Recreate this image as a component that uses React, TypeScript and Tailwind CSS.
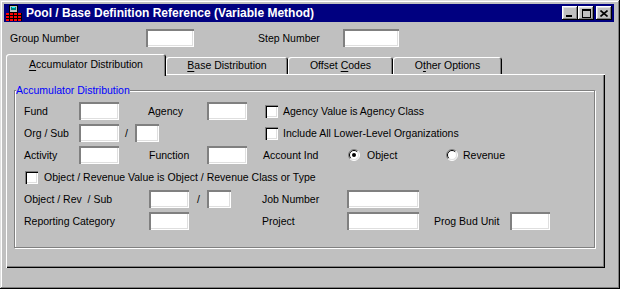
const raised =
  "bg-[#c0c0c0] shadow-[inset_-1px_-1px_0_#000,inset_1px_1px_0_#fff,inset_-2px_-2px_0_#808080,inset_2px_2px_0_#dfdfdf]";
const sunken =
  "bg-white shadow-[inset_1px_1px_0_#808080,inset_2px_2px_0_#808080,inset_-1px_-1px_0_#fff,inset_-2px_-2px_0_#dfdfdf]";

function Field({ className }: { className: string }) {
  return <div className={`h-[18px] shrink-0 ${sunken} ${className}`} />;
}

function Check() {
  return (
    <span className="h-[13px] w-[13px] shrink-0 bg-white shadow-[inset_1px_1px_0_#808080,inset_2px_2px_0_#000,inset_-1px_-1px_0_#fff,inset_-2px_-2px_0_#dfdfdf]" />
  );
}

function Radio({ checked }: { checked?: boolean }) {
  return (
    <svg width="12" height="12" viewBox="0 0 12 12" className="shrink-0">
      <circle cx="6" cy="6" r="5" fill="#fff" />
      <path d="M2.1 9.9A5.5 5.5 0 0 1 9.9 2.1" fill="none" stroke="#808080" />
      <path d="M2.8 9.2A4.5 4.5 0 0 1 9.2 2.8" fill="none" stroke="#000" />
      <path d="M9.9 2.1A5.5 5.5 0 0 1 2.1 9.9" fill="none" stroke="#fff" />
      <path d="M9.2 2.8A4.5 4.5 0 0 1 2.8 9.2" fill="none" stroke="#dfdfdf" />
      {checked && <circle cx="6" cy="6" r="2" fill="#000" />}
    </svg>
  );
}

function AppIcon() {
  return (
    <svg width="16" height="16" viewBox="0 0 16 16" className="shrink-0">
      <rect x="3.5" y="0.5" width="8" height="7" fill="#c0c0c0" stroke="#000" />
      <rect x="5" y="2" width="5" height="3" fill="#008080" />
      <rect x="6" y="2" width="3" height="1" fill="#00ffff" />
      <rect x="0" y="8" width="16" height="8" fill="#ff0000" />
      <path d="M0 10.5H16M0 13.5H16M3.5 8V16M7.5 8V16M11.5 8V16M15.5 8V16" stroke="#000" />
    </svg>
  );
}

function Tab({ label, hot, w }: { label: string; hot: number; w: string }) {
  return (
    <div
      className={`flex h-[17px] ${w} shrink-0 items-center justify-center rounded-t-[3px] shadow-[inset_1px_1px_0_#fff,inset_-1px_0_0_#000,inset_-2px_0_0_#808080]`}
    >
      <span className="whitespace-pre">
        {label.slice(0, hot)}
        <span className="underline underline-offset-[2px]">{label[hot]}</span>
        {label.slice(hot + 1)}
      </span>
    </div>
  );
}

export default function App() {
  return (
    <div className="flex h-[289px] w-[620px] flex-col bg-[#c0c0c0] p-[4px] pr-[6px] font-['Liberation_Sans',Arial,sans-serif] text-[10.5px] leading-[13px] text-black shadow-[inset_-1px_-1px_0_#000,inset_1px_1px_0_#dfdfdf,inset_-2px_-2px_0_#808080,inset_2px_2px_0_#fff]">
      {/* title bar */}
      <div className="flex h-[18px] shrink-0 items-center bg-[#000080] pl-[2px] pr-[2px]">
        <AppIcon />
        <span className="ml-[4px] text-[12px] font-bold leading-[14px] text-white">
          Pool / Base Definition Reference (Variable Method)
        </span>
        <div className="ml-auto flex items-center">
          <div className={`flex h-[14px] w-[16px] items-end justify-center pb-[3px] pr-[2px] ${raised}`}>
            <div className="h-[2px] w-[6px] bg-black" />
          </div>
          <div className={`flex h-[14px] w-[16px] items-center justify-center ${raised}`}>
            <div className="h-[9px] w-[9px] border border-t-2 border-black" />
          </div>
          <div className={`ml-[2px] flex h-[14px] w-[16px] items-center justify-center ${raised}`}>
            <svg width="8" height="7" viewBox="0 0 8 7">
              <path d="M0.5 0.5L7.5 6.5M7.5 0.5L0.5 6.5" stroke="#000" strokeWidth="1.6" />
            </svg>
          </div>
        </div>
      </div>

      {/* group / step */}
      <div className="mt-[7px] flex h-[18px] shrink-0 items-center pl-[6px]">
        <span className="w-[136px] shrink-0">Group Number</span>
        <Field className="w-[48px]" />
        <span className="ml-[64px] w-[85px] shrink-0">Step Number</span>
        <Field className="w-[56px]" />
      </div>

      {/* tabs */}
      <div className="mt-[7px] flex h-[20px] shrink-0 items-end pl-[2px]">
        <div className="relative z-10 -mb-[2px] flex h-[22px] w-[160px] shrink-0 items-center justify-center rounded-t-[3px] bg-[#c0c0c0] pb-[2px] shadow-[inset_1px_1px_0_#fff,inset_-1px_0_0_#000,inset_-2px_0_0_#808080]">
          <span>
            <span className="underline underline-offset-[2px]">A</span>ccumulator Distribution
          </span>
        </div>
        <Tab label="Base Distribution" hot={0} w="w-[122px]" />
        <Tab label="Offset Codes" hot={7} w="w-[105px]" />
        <Tab label="Other Options" hot={1} w="w-[109px]" />
      </div>

      {/* panel */}
      <div className="ml-[2px] h-[194px] w-[599px] shrink-0 pl-[8px] pt-[16px] shadow-[inset_1px_1px_0_#fff,inset_-1px_-1px_0_#000,inset_-2px_-2px_0_#808080]">
        <div className="relative flex h-[158px] w-[581px] flex-col gap-[4px] border border-[#808080] pl-[9px] pt-[11px] shadow-[inset_1px_1px_0_#fff,1px_1px_0_#fff]">
          <span className="absolute left-[1px] top-[-8px] bg-[#c0c0c0] leading-[14px] text-[#0000ff]">
            Accumulator Distribution
          </span>

          <div className="flex h-[18px] items-center">
            <span className="w-[55px] shrink-0">Fund</span>
            <Field className="w-[40px]" />
            <span className="ml-[29px] w-[59px] shrink-0">Agency</span>
            <Field className="w-[40px]" />
            <span className="ml-[18px]" />
            <Check />
            <span className="ml-[5px]">Agency Value is Agency Class</span>
          </div>

          <div className="flex h-[18px] items-center">
            <span className="w-[55px] shrink-0">Org / Sub</span>
            <Field className="w-[40px]" />
            <span className="w-[16px] shrink-0 pl-[6px]">/</span>
            <Field className="w-[24px]" />
            <span className="ml-[106px]" />
            <Check />
            <span className="ml-[5px]">Include All Lower-Level Organizations</span>
          </div>

          <div className="flex h-[18px] items-center">
            <span className="w-[55px] shrink-0">Activity</span>
            <Field className="w-[40px]" />
            <span className="ml-[30px] w-[58px] shrink-0">Function</span>
            <Field className="w-[40px]" />
            <span className="ml-[16px] w-[85px] shrink-0">Account Ind</span>
            <Radio checked />
            <span className="ml-[7px] w-[79px] shrink-0">Object</span>
            <Radio />
            <span className="ml-[5px]">Revenue</span>
          </div>

          <div className="flex h-[18px] items-center pl-[1px]">
            <Check />
            <span className="ml-[6px]">Object / Revenue Value is Object / Revenue Class or Type</span>
          </div>

          <div className="flex h-[18px] items-center">
            <span className="w-[125px] shrink-0 whitespace-pre">Object / Rev  / Sub</span>
            <Field className="w-[40px]" />
            <span className="w-[18px] shrink-0 pl-[8px]">/</span>
            <Field className="w-[24px]" />
            <span className="ml-[31px] w-[85px] shrink-0">Job Number</span>
            <Field className="w-[72px]" />
          </div>

          <div className="flex h-[18px] items-center">
            <span className="w-[125px] shrink-0">Reporting Category</span>
            <Field className="w-[40px]" />
            <span className="ml-[73px] w-[85px] shrink-0">Project</span>
            <Field className="w-[72px]" />
            <span className="ml-[15px] w-[76px] shrink-0">Prog Bud Unit</span>
            <Field className="w-[40px]" />
          </div>
        </div>
      </div>
    </div>
  );
}
